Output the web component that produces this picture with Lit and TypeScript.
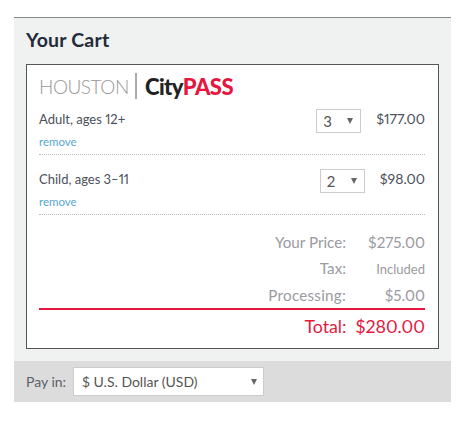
import { LitElement, html, css } from "lit";
import { customElement } from "lit/decorators.js";

@customElement("qty-select")
class QtySelect extends LitElement {
  static properties = { value: {} };
  value = "";
  static styles = css`
    :host { display: block; }
    .box { box-sizing: border-box; width: 45px; height: 24px; border: 1px solid #ccc; background: #fff;
      display: flex; align-items: center; justify-content: space-between; padding: 0 7px 0 6px;
      font-size: 15px; color: #555; }
    .arrow { width: 0; height: 0; border-left: 3.5px solid transparent; border-right: 3.5px solid transparent; border-top: 6px solid #666; }
  `;
  render() { return html`<div class="box"><span>${this.value}</span><i class="arrow"></i></div>`; }
}

@customElement("app-root")
class AppRoot extends LitElement {
  static styles = css`
    :host { display: block; width: 466px; height: 421px; background: #fff; font-family: Lato, "Liberation Sans", sans-serif; font-variant-numeric: proportional-nums; }
    .wrap { padding: 17px 15px 0 14px; }
    .panel { box-sizing: border-box; border-top: 1px solid #888; background: #f0f2f2; padding: 0 12px; height: 344px; }
    h1 { margin: 0; height: 46px; line-height: 44px; font-size: 19.5px; font-weight: 700; letter-spacing: 0.2px; color: #232b3a; }
    .card { box-sizing: border-box; height: 285px; border: 1px solid #555; background: #fff; padding: 8px 13px 0 12px; }
    .logo { height: 26px; display: flex; align-items: center; }
    .hou { font-size: 19px; font-weight: 300; color: #979797; letter-spacing: -0.45px; width: 96px; }
    .sep { width: 2px; height: 26px; background: #aaa; margin-right: 8px; }
    .city { font-size: 22px; font-weight: 900; color: #222; letter-spacing: -0.55px; }
    .pass { color: #e5173f; }
    .item { height: 46px; box-sizing: border-box; border-bottom: 1px dotted #bbb; margin-top: 10px; }
    .item + .item { margin-top: 14px; }
    .row { display: flex; align-items: flex-start; height: 26px; gap: 15px; }
    .name { flex: 1; font-size: 13px; color: #4a4f5a; padding-top: 2px; }
    .amt { font-size: 14px; color: #4a4f5a; line-height: 20px; }
    .remove { font-size: 11.5px; color: #57a8cf; line-height: 14px; }
    .sum { display: grid; grid-template-columns: 1fr 79px; margin-top: 17px; color: #9a9a9f; font-size: 15.2px; text-align: right; }
    .sum > div { height: 26.5px; line-height: 20px; }
    .sum .tax { line-height: 18px; }
    .sum .inc { font-size: 13px; line-height: 20px; }
    .sum .proc { letter-spacing: 0.25px; }
    .rule { height: 2px; background: #e5173f; margin-top: -4px; }
    .total { display: flex; justify-content: flex-end; color: #e5173f; font-size: 17.8px; height: 32px; align-items: center; gap: 9px; }
    .foot { height: 41px; background: #dcdcdc; display: flex; align-items: center; padding-left: 12px; gap: 7px; font-size: 14px; color: #5a5f6a; }
    .pick { box-sizing: border-box; width: 191px; height: 29px; background: #fff; border: 1px solid #ccc;
      display: flex; align-items: center; justify-content: space-between; padding: 0 4px 0 8px; font-size: 14px; color: #555; }
    .arrow { width: 0; height: 0; border-left: 3.5px solid transparent; border-right: 3.5px solid transparent; border-top: 6px solid #666; margin-right: 2px; }
  `;
  render() {
    return html`<div class="wrap">
      <div class="panel">
        <h1>Your Cart</h1>
        <div class="card">
          <div class="logo">
            <span class="hou">HOUSTON</span><i class="sep"></i>
            <span class="city">City<span class="pass">PASS</span></span>
          </div>
          <div class="item">
            <div class="row">
              <div class="name">Adult, ages 12+</div>
              <qty-select value="3"></qty-select>
              <div class="amt">$177.00</div>
            </div>
            <div class="remove">remove</div>
          </div>
          <div class="item">
            <div class="row">
              <div class="name">Child, ages 3–11</div>
              <qty-select value="2"></qty-select>
              <div class="amt">$98.00</div>
            </div>
            <div class="remove">remove</div>
          </div>
          <div class="sum">
            <div>Your Price:</div><div>$275.00</div>
            <div class="tax">Tax:</div><div class="inc">Included</div>
            <div class="proc">Processing:</div><div>$5.00</div>
          </div>
          <div class="rule"></div>
          <div class="total"><span>Total:</span><span>$280.00</span></div>
        </div>
      </div>
      <div class="foot">
        <span>Pay in:</span>
        <div class="pick"><span>$ U.S. Dollar (USD)</span><i class="arrow"></i></div>
      </div>
    </div>`;
  }
}
